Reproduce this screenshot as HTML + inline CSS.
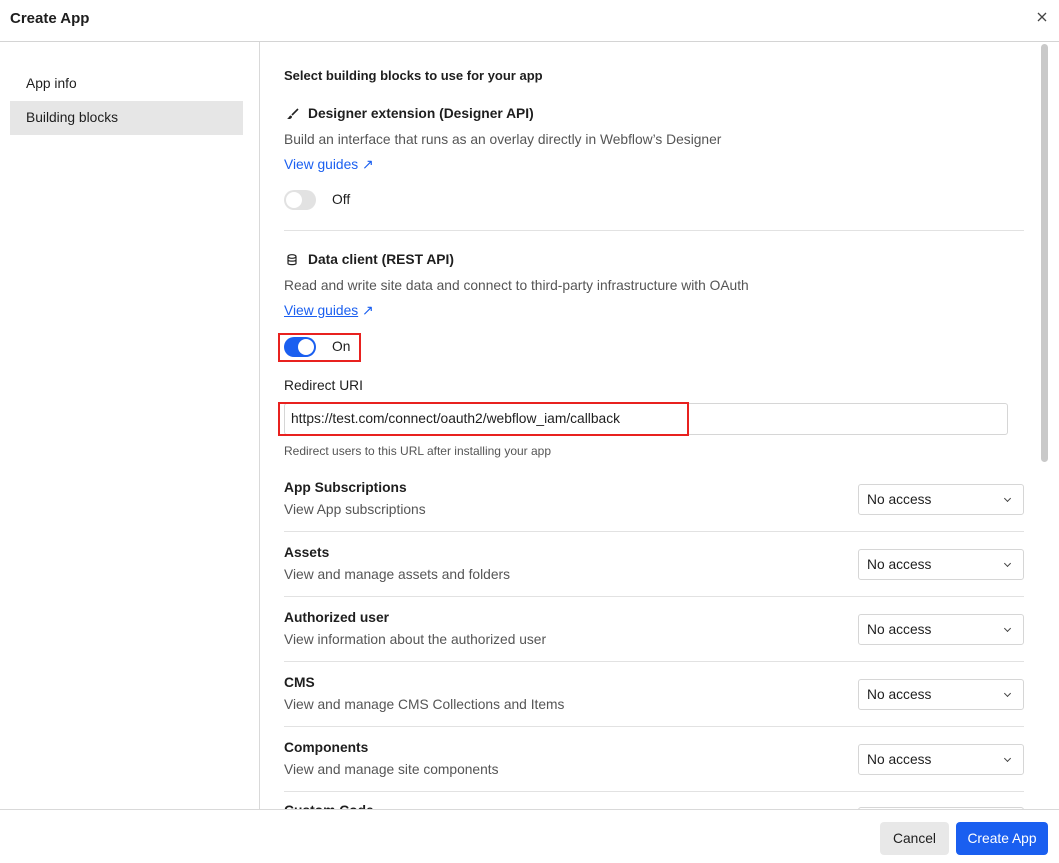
<!DOCTYPE html>
<html><head><style>
*{box-sizing:border-box;margin:0;padding:0}
body{width:1059px;height:863px;overflow:hidden;background:#fff;font-family:"Liberation Sans",sans-serif;color:#1e1e1e;position:relative;font-size:13.8px}
.a{position:absolute;white-space:nowrap}
.t{font-weight:bold;font-size:13.8px}
.d{color:#555;font-size:13.8px}
.sel{position:absolute;left:858px;width:166px;height:31px;border:1px solid #d6d6d6;border-radius:3px;font-size:13.8px;padding:7px 8px}
.sel:after{content:"";position:absolute;right:13px;top:11px;width:4px;height:4px;border-right:1.3px solid #444;border-bottom:1.3px solid #444;transform:rotate(45deg)}
.hr{position:absolute;left:284px;width:740px;height:1px;background:#e2e2e2}
a{color:#1a5ff0;text-decoration:none}
</style></head><body>
<div class="a t" style="left:10px;top:10px;font-size:15px">Create App</div>
<svg class="a" style="left:1037px;top:12px" width="10" height="10" viewBox="0 0 10 10"><path d="M1 1L9 9M9 1L1 9" stroke="#444" stroke-width="1.3"/></svg>
<div style="position:absolute;left:0;top:41px;width:1059px;height:1px;background:#d4d4d4"></div>
<div style="position:absolute;left:259px;top:42px;width:1px;height:767px;background:#d9d9d9"></div>
<div class="a" style="left:26px;top:76px">App info</div>
<div style="position:absolute;left:10px;top:101px;width:233px;height:34px;background:#e6e6e6"></div>
<div class="a" style="left:26px;top:110px">Building blocks</div>
<div style="position:absolute;left:1041px;top:44px;width:7px;height:418px;background:#c9c9c9;border-radius:4px"></div>

<div class="a t" style="left:284px;top:68px;font-size:13px">Select building blocks to use for your app</div>
<svg class="a" style="left:286px;top:108px" width="13" height="12" viewBox="0 0 13 12"><path d="M12 1L6 7" stroke="#222" stroke-width="1.6"/><path d="M5 7.5C3 7.5 3 10 1 10.5C3 11.5 6 11 6 8.5Z" fill="#222"/></svg>
<div class="a t" style="left:308px;top:106px">Designer extension (Designer API)</div>
<div class="a d" style="left:284px;top:132px">Build an interface that runs as an overlay directly in Webflow’s Designer</div>
<div class="a" style="left:284px;top:157px"><a>View guides ↗</a></div>
<div style="position:absolute;left:284px;top:190px;width:32px;height:20px;border-radius:10px;background:#e2e2e2"><div style="position:absolute;left:2px;top:2px;width:16px;height:16px;border-radius:8px;background:#fff"></div></div>
<div class="a" style="left:332px;top:192px">Off</div>
<div class="hr" style="top:230px"></div>
<svg class="a" style="left:287px;top:254px" width="10" height="12" viewBox="0 0 10 12"><ellipse cx="5" cy="2.5" rx="4" ry="1.8" fill="none" stroke="#222" stroke-width="1.2"/><path d="M1 2.5V9.5C1 11 9 11 9 9.5V2.5M1 6C1 7.5 9 7.5 9 6" fill="none" stroke="#222" stroke-width="1.2"/></svg>
<div class="a t" style="left:308px;top:252px">Data client (REST API)</div>
<div class="a d" style="left:284px;top:278px">Read and write site data and connect to third-party infrastructure with OAuth</div>
<div class="a" style="left:284px;top:303px"><a style="text-decoration:underline">View guides</a> <a>↗</a></div>
<div style="position:absolute;left:278px;top:333px;width:83px;height:29px;border:2px solid #e8211f"></div>
<div style="position:absolute;left:284px;top:337px;width:32px;height:20px;border-radius:10px;background:#1a5ff0"><div style="position:absolute;left:14px;top:2px;width:16px;height:16px;border-radius:8px;background:#fff"></div></div>
<div class="a" style="left:332px;top:339px">On</div>
<div class="a" style="left:284px;top:378px">Redirect URI</div>
<div style="position:absolute;left:284px;top:403px;width:724px;height:32px;border:1px solid #d6d6d6;border-radius:3px"></div>
<div style="position:absolute;left:278px;top:402px;width:411px;height:34px;border:2px solid #e8211f"></div>
<div class="a" style="left:291px;top:411px">https://test.com/connect/oauth2/webflow_iam/callback</div>
<div class="a d" style="left:284px;top:444px;font-size:12px">Redirect users to this URL after installing your app</div>

<div class="a t" style="left:284px;top:480px">App Subscriptions</div><div class="a d" style="left:284px;top:502px">View App subscriptions</div><div class="sel" style="top:484px">No access</div><div class="hr" style="top:531px"></div>
<div class="a t" style="left:284px;top:545px">Assets</div><div class="a d" style="left:284px;top:567px">View and manage assets and folders</div><div class="sel" style="top:549px">No access</div><div class="hr" style="top:596px"></div>
<div class="a t" style="left:284px;top:610px">Authorized user</div><div class="a d" style="left:284px;top:632px">View information about the authorized user</div><div class="sel" style="top:614px">No access</div><div class="hr" style="top:661px"></div>
<div class="a t" style="left:284px;top:675px">CMS</div><div class="a d" style="left:284px;top:697px">View and manage CMS Collections and Items</div><div class="sel" style="top:679px">No access</div><div class="hr" style="top:726px"></div>
<div class="a t" style="left:284px;top:740px">Components</div><div class="a d" style="left:284px;top:762px">View and manage site components</div><div class="sel" style="top:744px">No access</div><div class="hr" style="top:791px"></div>
<div class="a t" style="left:284px;top:803px">Custom Code</div>
<div class="sel" style="top:807px"></div>
<div style="position:absolute;left:0;top:809px;width:1059px;height:54px;background:#fff;border-top:1px solid #d9d9d9"></div>
<div style="position:absolute;left:880px;top:822px;width:69px;height:33px;background:#e8e8e8;border-radius:4px;text-align:center;line-height:33px">Cancel</div>
<div style="position:absolute;left:956px;top:822px;width:92px;height:33px;background:#1a5ff0;color:#fff;border-radius:4px;text-align:center;line-height:33px">Create App</div>
</body></html>
